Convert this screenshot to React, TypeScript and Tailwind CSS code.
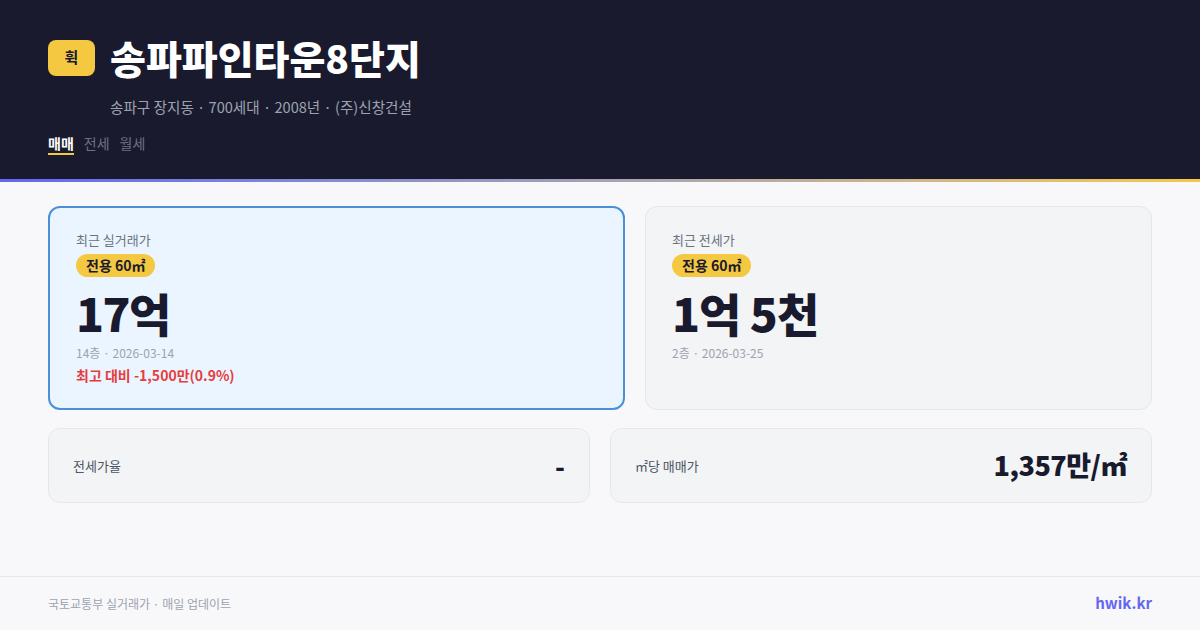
import React from "react";

const font = { fontFamily: '"Noto Sans CJK KR", "Noto Sans", sans-serif' };

export default function App() {
  return (
    <div className="w-[1200px] h-[630px] bg-[#f8f8fa] flex flex-col overflow-hidden" style={font}>
      <header className="bg-[#1a1a2e] px-12 pt-[36px] pb-[24px]">
        <div className="flex items-center gap-[15px]">
          <div className="w-[47px] h-[36px] rounded-lg bg-[#f5c842] flex items-center justify-center text-[15px] font-bold text-[#1a1a2e]">
            휙
          </div>
          <h1 className="text-[39px] leading-[43px] font-black text-white">
            송파파인타운8단지
          </h1>
        </div>
        <div className="pl-[62px] mt-[18px] text-[14.6px] leading-[20px] text-[#9ca3af]">
          송파구 장지동 · 700세대 · 2008년 · (주)신창건설
        </div>
        <div className="flex gap-[10px] mt-[16px] text-[14px] leading-[20px]">
          <span className="text-white font-bold border-b-2 border-[#f5c842]">매매</span>
          <span className="text-[#6b7280]">전세</span>
          <span className="text-[#6b7280]">월세</span>
        </div>
      </header>
      <div className="h-[3px] bg-gradient-to-r from-[#6366f1] to-[#f5c842]" />

      <main className="px-12 pt-[24px] flex-1">
        <div className="grid grid-cols-[577px_507px] gap-[20px]">
          <div className="h-[204px] rounded-xl border-2 border-[#4a90d9] bg-[#ebf5ff] px-[26px] pt-[24px]">
            <div className="text-[13px] leading-[16px] text-[#6b7280]">최근 실거래가</div>
            <div className="mt-[6px] inline-flex items-center h-[23px] px-[10px] rounded-full bg-[#f5c842] text-[14px] font-bold text-[#1a1a2e]">
              전용 60㎡
            </div>
            <div className="mt-[4px] text-[46px] leading-[62px] font-extrabold tracking-[-1.5px] text-[#1a1a2e]">17억</div>
            <div className="mt-[2px] text-[12px] leading-[16px] text-[#9ca3af]">14층 · 2026-03-14</div>
            <div className="mt-[4px] text-[14px] leading-[20px] font-semibold text-[#e53e3e]">최고 대비 -1,500만(0.9%)</div>
          </div>
          <div className="h-[204px] rounded-xl border border-[#e5e7eb] bg-[#f3f4f6] px-[26px] pt-[25px]">
            <div className="text-[13px] leading-[16px] text-[#6b7280]">최근 전세가</div>
            <div className="mt-[6px] inline-flex items-center h-[23px] px-[10px] rounded-full bg-[#f5c842] text-[14px] font-bold text-[#1a1a2e]">
              전용 60㎡
            </div>
            <div className="mt-[4px] text-[46px] leading-[62px] font-extrabold tracking-[-1px] text-[#1a1a2e]">1억 5천</div>
            <div className="mt-[2px] text-[12px] leading-[16px] text-[#9ca3af]">2층 · 2026-03-25</div>
          </div>
        </div>
        <div className="grid grid-cols-2 gap-[20px] mt-[18px]">
          <div className="h-[75px] rounded-xl border border-[#e5e7eb] bg-[#f3f4f6] px-[24px] flex items-center justify-between">
            <span className="text-[13px] text-[#4b5563]">전세가율</span>
            <span className="text-[26px] font-extrabold text-[#1a1a2e]">-</span>
          </div>
          <div className="h-[75px] rounded-xl border border-[#e5e7eb] bg-[#f3f4f6] px-[24px] flex items-center justify-between">
            <span className="text-[13px] text-[#4b5563]">㎡당 매매가</span>
            <span className="text-[27px] font-extrabold tracking-[-0.5px] text-[#1a1a2e]">1,357만/㎡</span>
          </div>
        </div>
      </main>

      <footer className="h-[54px] border-t border-[#e5e7eb] px-12 flex items-center justify-between">
        <span className="text-[12px] text-[#9ca3af]">국토교통부 실거래가 · 매일 업데이트</span>
        <span className="text-[15px] font-bold text-[#6366f1]">hwik.kr</span>
      </footer>
    </div>
  );
}
